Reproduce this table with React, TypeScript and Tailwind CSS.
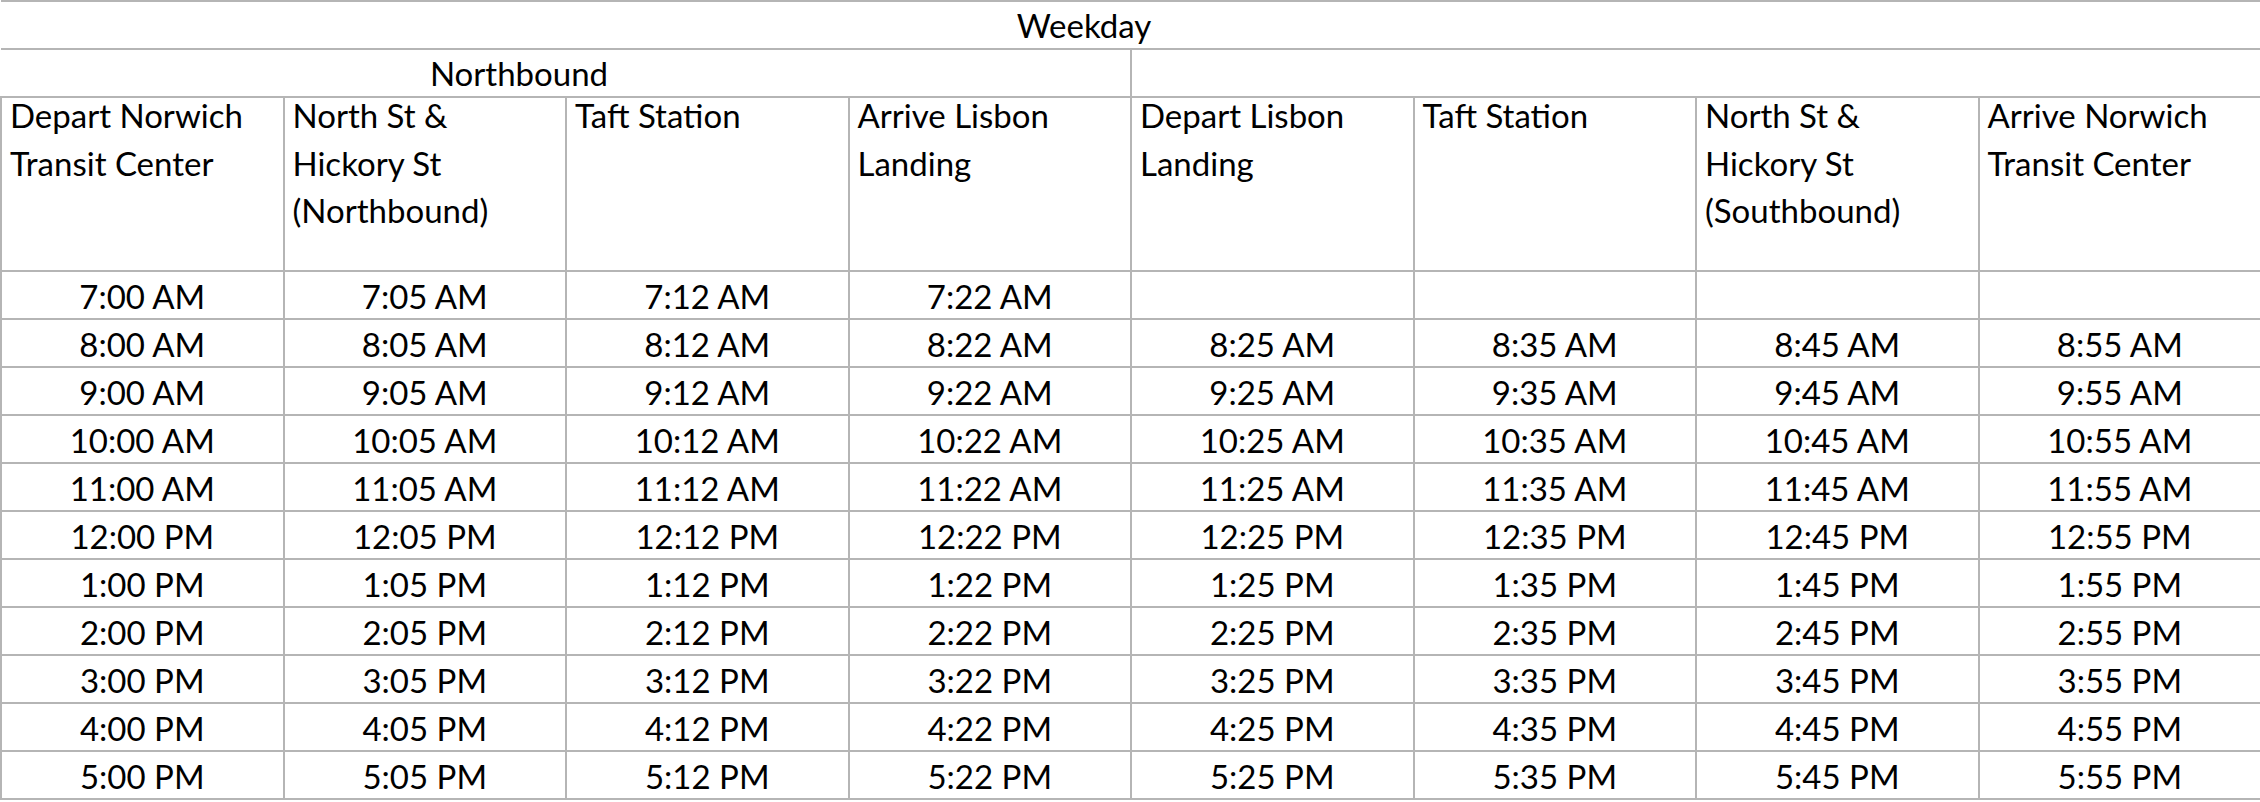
import React from "react";

const headers = [
  "Depart Norwich Transit Center",
  "North St & Hickory St (Northbound)",
  "Taft Station",
  "Arrive Lisbon Landing",
  "Depart Lisbon Landing",
  "Taft Station",
  "North St & Hickory St (Southbound)",
  "Arrive Norwich Transit Center",
];

const hours = [
  ["7", "AM"],
  ["8", "AM"],
  ["9", "AM"],
  ["10", "AM"],
  ["11", "AM"],
  ["12", "PM"],
  ["1", "PM"],
  ["2", "PM"],
  ["3", "PM"],
  ["4", "PM"],
  ["5", "PM"],
];
const mins = ["00", "05", "12", "22", "25", "35", "45", "55"];

export default function App() {
  return (
    <div
      className="w-[2260px] h-[802px] bg-white text-black overflow-hidden"
      style={{ fontFamily: "Lato, 'Noto Sans', sans-serif" }}
    >
      <table className="w-[2260px] table-fixed border-collapse text-[33px]">
        <colgroup>
          {mins.map((m, i) => (
            <col key={i} className="w-[282.5px]" />
          ))}
        </colgroup>
        <tbody>
          <tr className="h-[48px]">
            <td
              colSpan={8}
              className="border-t-2 border-b-2 border-r-2 border-[#b5b5b5] text-center pr-[93px] leading-none align-middle"
            >
              Weekday
            </td>
          </tr>
          <tr className="h-[48px]">
            <td
              colSpan={4}
              className="border-b-2 border-r-2 border-[#b5b5b5] text-center pr-[93px] leading-none align-middle"
            >
              Northbound
            </td>
            <td colSpan={4} className="border-b-2 border-r-2 border-[#b5b5b5]" />
          </tr>
          <tr className="h-[174px]">
            {headers.map((h, i) => (
              <td
                key={i}
                className="border-2 border-[#b5b5b5] align-top text-left px-2 pt-0 leading-[47.5px]"
              >
                <div className="-mt-[6px]">{h}</div>
              </td>
            ))}
          </tr>
          {hours.map(([hr, ap], r) => (
            <tr key={r} className="h-[48px]">
              {mins.map((m, c) => (
                <td
                  key={c}
                  className="border-2 border-[#b5b5b5] text-center align-middle leading-none pt-[3px]"
                >
                  {r === 0 && c >= 4 ? "" : `${hr}:${m} ${ap}`}
                </td>
              ))}
            </tr>
          ))}
        </tbody>
      </table>
    </div>
  );
}
